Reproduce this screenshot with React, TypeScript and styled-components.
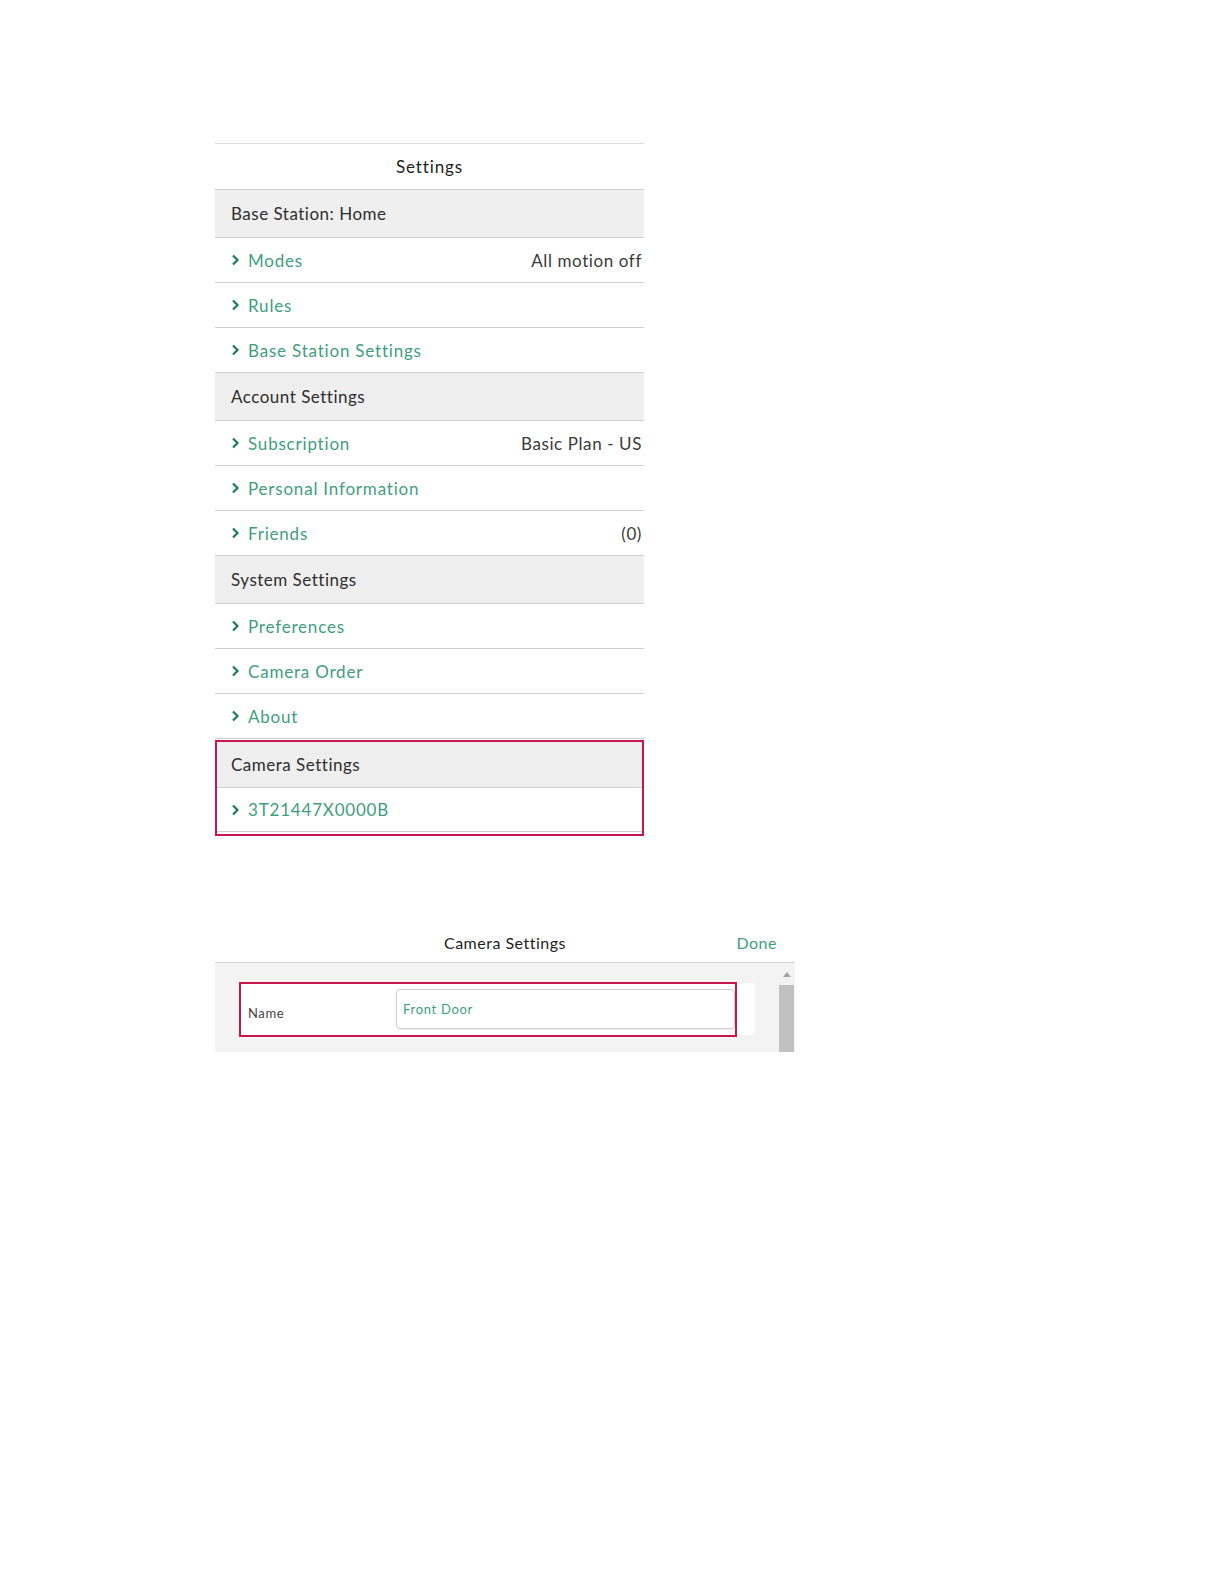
import React from "react"
import styled, { createGlobalStyle } from "styled-components"

const GlobalStyle = createGlobalStyle`
  body {
    margin: 0;
    background: #ffffff;
    font-family: Lato, "Open Sans", "Liberation Sans", sans-serif;
    color: #2b2b2b;
  }
`

const green = "#3f9e80"
const darkGreen = "#1f7a5c"
const line = "#cfcfcf"
const highlight = "#c8174f"

const Page = styled.main`
  padding: 143px 0 0 215px;
  display: flex;
  flex-direction: column;
`

const SettingsPanel = styled.section`
  width: 429px;
  border-top: 1px solid #dcdcdc;
  display: flex;
  flex-direction: column;
`

const TitleBar = styled.header`
  height: 45px;
  display: flex;
  align-items: center;
  justify-content: center;
  font-size: 17px;
  letter-spacing: 0.9px;
  color: #1e1e1e;
  border-bottom: 1px solid ${line};
`

const SectionHeader = styled.div`
  height: 47px;
  display: flex;
  align-items: center;
  padding-left: 16px;
  background: #efefef;
  border-bottom: 1px solid ${line};
  font-size: 17px;
  letter-spacing: 0.5px;
  color: #2e2e2e;
`

const Row = styled.div`
  height: 44px;
  display: flex;
  align-items: center;
  padding: 0 2px 0 16px;
  border-bottom: 1px solid ${line};
  font-size: 17px;
`

const Chevron = styled.span`
  display: inline-flex;
  width: 17px;
  color: ${darkGreen};
`

const RowLabel = styled.span`
  color: ${green};
  letter-spacing: 0.8px;
  flex: 1;
`

const RowValue = styled.span`
  color: #3a3a3a;
  letter-spacing: 0.6px;
`

const Highlighted = styled.div`
  margin-top: 1px;
  border: 2px solid ${highlight};
  display: flex;
  flex-direction: column;
  padding-bottom: 2px;
  & > div:first-child {
    height: 45px;
    padding-left: 14px;
  }
  & > div:last-child {
    height: 43px;
    padding-left: 14px;
  }
`

const CameraPanel = styled.section`
  margin-top: 86px;
  width: 580px;
  display: flex;
  flex-direction: column;
`

const CameraTitle = styled.header`
  height: 40px;
  display: grid;
  grid-template-columns: 1fr auto 1fr;
  align-items: center;
  border-bottom: 1px solid #d6d6d6;
  font-size: 16px;
  letter-spacing: 0.5px;
  color: #1e1e1e;
`

const DoneButton = styled.span`
  justify-self: end;
  padding-right: 18px;
  color: ${green};
`

const CameraBody = styled.div`
  height: 89px;
  background: #f3f3f3;
  display: flex;
`

const CameraContent = styled.div`
  flex: 1;
  padding: 20px 23px 0 25px;
`

const Card = styled.div`
  background: #ffffff;
  border-radius: 4px;
  height: 52px;
  display: flex;
  align-items: center;
`

const FormRow = styled.div`
  width: 494px;
  height: 51px;
  margin-left: -1px;
  border: 2px solid ${highlight};
  display: flex;
  align-items: center;
`

const FieldLabel = styled.label`
  width: 148px;
  padding-left: 7px;
  padding-top: 8px;
  font-size: 13px;
  letter-spacing: 0.6px;
  color: #444;
`

const NameInput = styled.div`
  width: 331px;
  height: 38px;
  border: 1px solid #cdcdcd;
  border-radius: 4px;
  box-shadow: 0 1px 2px rgba(0, 0, 0, 0.08);
  display: flex;
  align-items: center;
  padding-left: 6px;
  font-size: 13px;
  letter-spacing: 0.7px;
  color: ${green};
`

const Scrollbar = styled.div`
  width: 17px;
  display: flex;
  flex-direction: column;
  align-items: center;
`

const ScrollArrow = styled.div`
  height: 22px;
  display: flex;
  align-items: center;
  justify-content: center;
`

const ScrollThumb = styled.div`
  flex: 1;
  width: 15px;
  background: #c1c1c1;
`

const ChevronIcon = () => (
  <svg width="9" height="12" viewBox="0 0 9 12">
    <path d="M2 1.5 L6.5 6 L2 10.5" fill="none" stroke="currentColor" strokeWidth="2.2" />
  </svg>
)

type Item = { label: string; value?: string }

const sections: { title: string; items: Item[] }[] = [
  {
    title: "Base Station: Home",
    items: [{ label: "Modes", value: "All motion off" }, { label: "Rules" }, { label: "Base Station Settings" }],
  },
  {
    title: "Account Settings",
    items: [
      { label: "Subscription", value: "Basic Plan - US" },
      { label: "Personal Information" },
      { label: "Friends", value: "(0)" },
    ],
  },
  {
    title: "System Settings",
    items: [{ label: "Preferences" }, { label: "Camera Order" }, { label: "About" }],
  },
]

function SettingRow({ label, value }: Item) {
  return (
    <Row>
      <Chevron>
        <ChevronIcon />
      </Chevron>
      <RowLabel>{label}</RowLabel>
      {value && <RowValue>{value}</RowValue>}
    </Row>
  )
}

export default function App(): JSX.Element {
  return (
    <>
      <GlobalStyle />
      <Page>
        <SettingsPanel>
          <TitleBar>Settings</TitleBar>
          {sections.map((section) => (
            <React.Fragment key={section.title}>
              <SectionHeader>{section.title}</SectionHeader>
              {section.items.map((item) => (
                <SettingRow key={item.label} {...item} />
              ))}
            </React.Fragment>
          ))}
          <Highlighted>
            <SectionHeader>Camera Settings</SectionHeader>
            <SettingRow label="3T21447X0000B" />
          </Highlighted>
        </SettingsPanel>

        <CameraPanel>
          <CameraTitle>
            <span />
            <span>Camera Settings</span>
            <DoneButton>Done</DoneButton>
          </CameraTitle>
          <CameraBody>
            <CameraContent>
              <Card>
                <FormRow>
                  <FieldLabel>Name</FieldLabel>
                  <NameInput>Front Door</NameInput>
                </FormRow>
              </Card>
            </CameraContent>
            <Scrollbar>
              <ScrollArrow>
                <svg width="8" height="5" viewBox="0 0 8 5">
                  <path d="M0 5 L4 0 L8 5 Z" fill="#a3a3a3" />
                </svg>
              </ScrollArrow>
              <ScrollThumb />
            </Scrollbar>
          </CameraBody>
        </CameraPanel>
      </Page>
    </>
  )
}
